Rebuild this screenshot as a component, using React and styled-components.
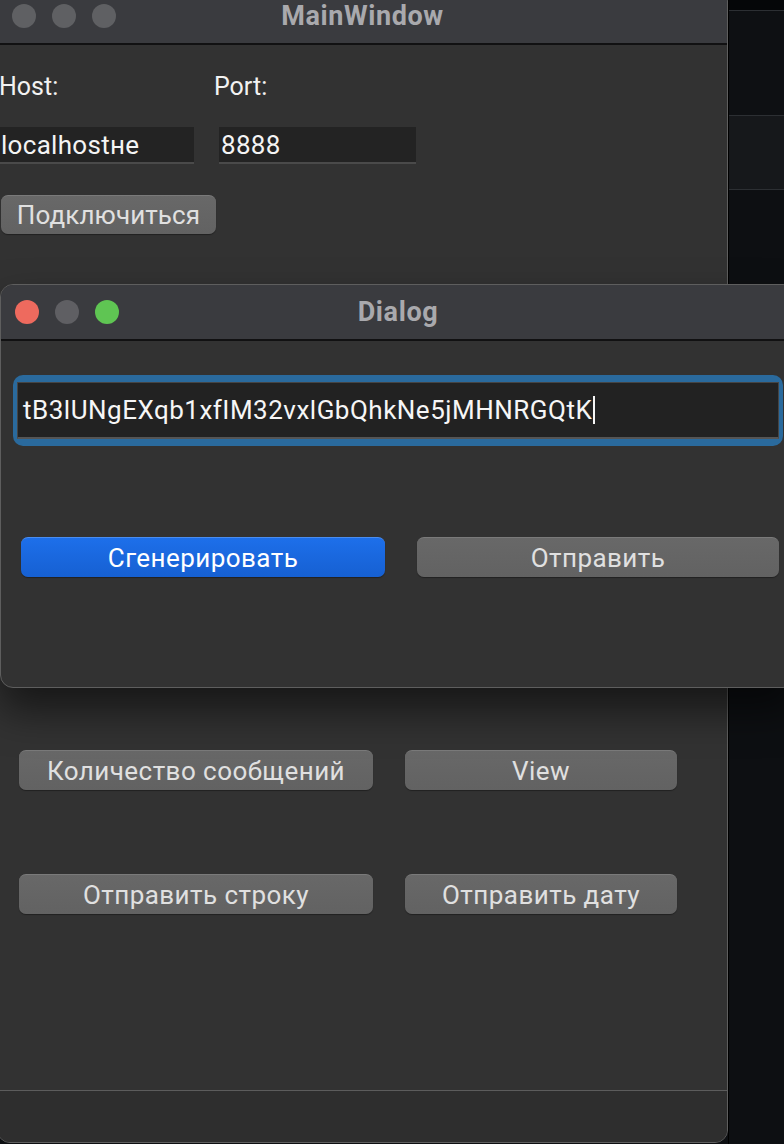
import React from 'react'
import styled, { createGlobalStyle } from 'styled-components'

const GlobalStyle = createGlobalStyle`
  html, body {
    margin: 0;
    padding: 0;
    background: #0d0f12;
  }
  body {
    font-family: Roboto, "Liberation Sans", sans-serif;
  }
`

const Desktop = styled.div`
  position: relative;
  width: 784px;
  height: 1144px;
  overflow: hidden;
  background: #0d0f12;
`

const SidePanel = styled.div`
  position: absolute;
  left: 728px;
  top: 0;
  right: 0;
  bottom: 0;
  display: flex;
  flex-direction: column;
  border-left: 1px solid #000;
`

const SideRow = styled.div`
  height: ${props => props.h || 'auto'};
  flex: ${props => (props.grow ? 1 : 'none')};
  background: ${props => props.bg};
  border-bottom: ${props => (props.line ? '1px solid #2c2f33' : 'none')};
`

const Window = styled.div`
  position: absolute;
  left: ${props => props.left}px;
  top: ${props => props.top}px;
  width: ${props => props.w}px;
  height: ${props => props.h}px;
  display: flex;
  flex-direction: column;
  background: #323232;
  border: 1px solid #5e5e5e;
  border-radius: 13px;
  overflow: hidden;
  box-sizing: border-box;
  box-shadow: ${props => props.shadow || 'none'};
`

const TitleBar = styled.div`
  position: relative;
  height: 56px;
  flex: none;
  display: flex;
  align-items: center;
  justify-content: center;
  background: #3a3b3f;
  border-bottom: 2px solid #111112;
  box-sizing: border-box;
`

const Title = styled.span`
  font-size: 27px;
  font-weight: 700;
  color: #a9a9ad;
  letter-spacing: 0.6px;
`

const Lights = styled.div`
  position: absolute;
  left: 14px;
  top: 15px;
  display: flex;
  gap: 16px;
`

const Light = styled.span`
  width: 24px;
  height: 24px;
  border-radius: 50%;
  background: ${props => props.color || '#5f6063'};
`

const MainContent = styled.div`
  flex: 1;
  display: flex;
  flex-direction: column;
  padding: 27px 0 0 0;
`

const Form = styled.div`
  display: grid;
  grid-template-columns: 196px 197px;
  column-gap: 25px;
  row-gap: 25px;
`

const Label = styled.div`
  font-size: 25px;
  line-height: 30px;
  color: #f2f2f2;
  margin-left: ${props => props.pad || 0}px;
`

const Field = styled.div`
  height: 37px;
  display: flex;
  align-items: center;
  background: #232323;
  border-bottom: 2px solid #4a4a4a;
  box-sizing: border-box;
  padding-left: ${props => props.pad || 3}px;
  font-size: 26px;
  letter-spacing: 0.3px;
  color: #f4f4f4;
`

const Button = styled.div`
  height: ${props => props.h || 40}px;
  width: ${props => (props.w ? `${props.w}px` : 'auto')};
  display: flex;
  align-items: center;
  justify-content: center;
  border-radius: 7px;
  box-sizing: border-box;
  font-size: 26px;
  letter-spacing: ${props => props.ls || 0.45}px;
  color: ${props => (props.primary ? '#ffffff' : '#e0e0e0')};
  background: ${props =>
    props.primary
      ? 'linear-gradient(#1d6fea, #1660d2)'
      : 'linear-gradient(#686868, #626262)'};
  border-top: 1px solid ${props => (props.primary ? '#4a8df0' : '#7a7a7a')};
  box-shadow: 0 1px 1px rgba(0, 0, 0, 0.35);
`

const ConnectRow = styled.div`
  margin-top: 31px;
  padding-left: 3px;
`

const ActionGrid = styled.div`
  margin-top: 516px;
  margin-left: 21px;
  display: grid;
  grid-template-columns: 354px 272px;
  column-gap: 32px;
  row-gap: 84px;
`

const StatusBar = styled.div`
  margin-top: auto;
  height: 51px;
  background: #2e2e2e;
  border-top: 1px solid #5c5c5c;
`

const DialogContent = styled.div`
  flex: 1;
  display: flex;
  flex-direction: column;
  padding: 34px 12px 0 12px;
`

const FocusRing = styled.div`
  padding: 7px 4px;
  border-radius: 10px;
  background: #2a6a9d;
`

const LineEdit = styled.div`
  height: 57px;
  display: flex;
  align-items: center;
  padding-left: 5px;
  background: #222222;
  border: 1px solid #454545;
  border-bottom: 2px solid #555;
  box-sizing: border-box;
  font-size: 26px;
  letter-spacing: 0.5px;
  color: #f6f6f6;
  white-space: nowrap;
`

const Caret = styled.span`
  display: inline-block;
  width: 1.5px;
  height: 28px;
  margin-left: 1px;
  background: #f6f6f6;
`

const DialogButtons = styled.div`
  margin-top: 91px;
  padding: 0 4px 0 8px;
  display: grid;
  grid-template-columns: 364px 362px;
  column-gap: 32px;
`

export default function App() {
  return (
    <Desktop>
      <GlobalStyle />
      <SidePanel>
        <SideRow h="10px" bg="#050608" line />
        <SideRow h="104px" bg="#0e1013" line />
        <SideRow h="73px" bg="#16181b" line />
        <SideRow grow bg="#0d0f12" />
      </SidePanel>

      <Window left={-3} top={-12} w={731} h={1155}>
        <TitleBar>
          <Lights>
            <Light />
            <Light />
            <Light />
          </Lights>
          <Title>MainWindow</Title>
        </TitleBar>
        <MainContent>
          <Form>
            <Label pad={1}>Host:</Label>
            <Label pad={-5}>Port:</Label>
            <Field>localhostне</Field>
            <Field pad={2}>8888</Field>
          </Form>
          <ConnectRow>
            <Button w={215} h={39} ls={0.1}>Подключиться</Button>
          </ConnectRow>
          <ActionGrid>
            <Button>Количество сообщений</Button>
            <Button>View</Button>
            <Button>Отправить строку</Button>
            <Button>Отправить дату</Button>
          </ActionGrid>
          <StatusBar />
        </MainContent>
      </Window>

      <Window
        left={0}
        top={284}
        w={796}
        h={404}
        shadow="0 22px 40px rgba(0, 0, 0, 0.55)"
      >
        <TitleBar>
          <Lights>
            <Light color="#ee6a5e" />
            <Light color="#5f5f63" />
            <Light color="#5fc553" />
          </Lights>
          <Title>Dialog</Title>
        </TitleBar>
        <DialogContent>
          <FocusRing>
            <LineEdit>
              tB3lUNgEXqb1xfIM32vxlGbQhkNe5jMHNRGQtK
              <Caret />
            </LineEdit>
          </FocusRing>
          <DialogButtons>
            <Button primary>Сгенерировать</Button>
            <Button>Отправить</Button>
          </DialogButtons>
        </DialogContent>
      </Window>
    </Desktop>
  )
}
